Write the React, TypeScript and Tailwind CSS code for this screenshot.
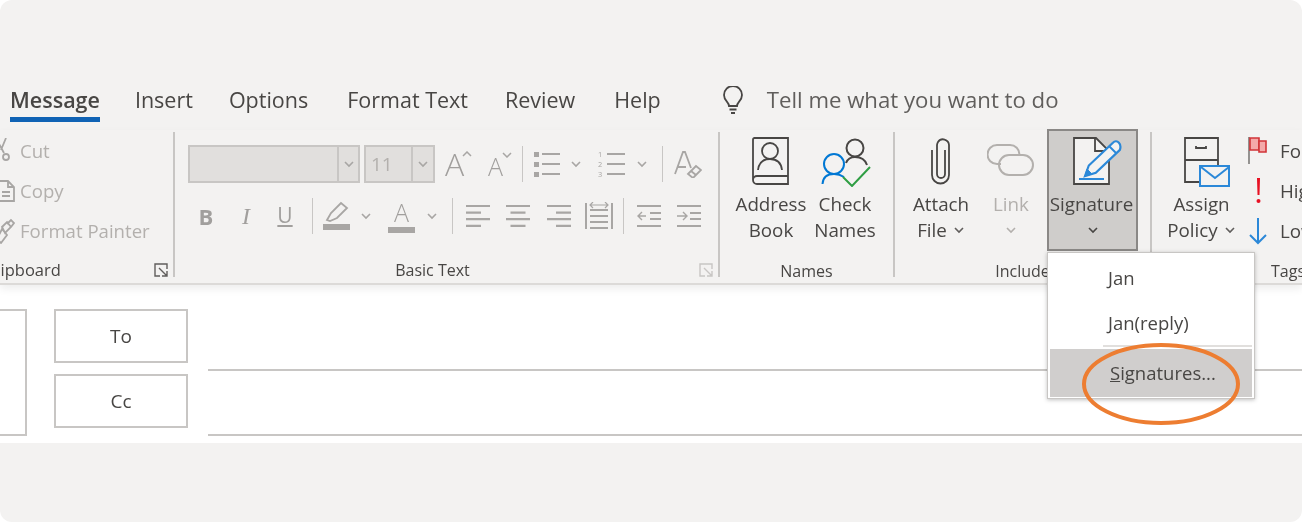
const tabs = [
  { label: "Insert", cls: "ml-[35px]" },
  { label: "Options", cls: "ml-[36px]" },
  { label: "Format Text", cls: "ml-[39px]" },
  { label: "Review", cls: "ml-[37px]" },
  { label: "Help", cls: "ml-[39px]" },
];

const GRAY = "#a8a6a4";
const DARK = "#605e5c";
const BLUE = "#2b88d8";

function Chevron({ color = GRAY, className = "" }: { color?: string; className?: string }) {
  return (
    <svg width="12" height="8" viewBox="0 0 12 8" className={className} fill="none" stroke={color} strokeWidth="1.6">
      <path d="M2 2l4 4 4-4" />
    </svg>
  );
}

function Sep({ h = "h-[36px]", ml }: { h?: string; ml: string }) {
  return <div className={`w-[1px] bg-[#c8c6c4] ${h} ${ml}`} />;
}

function GroupSep() {
  return <div className="w-[2px] h-[145px] mt-[2px] bg-[#c8c6c4] shrink-0" />;
}

function Launcher({ color, className = "" }: { color: string; className?: string }) {
  return (
    <svg width="14" height="14" viewBox="0 0 14 14" className={className} fill="none" stroke={color} strokeWidth="1.4">
      <path d="M13 6V1H1v12h5M5 5l8 8M13 8v5H8" />
    </svg>
  );
}

function Lines({ widths, aligns }: { widths: number[]; aligns: "left" | "center" | "right" }) {
  return (
    <svg width="26" height="24" viewBox="0 0 26 24" stroke={GRAY} strokeWidth="2.2">
      {widths.map((l, i) => {
        const x = aligns === "left" ? 1 : aligns === "right" ? 25 - l : 13 - l / 2;
        return <path key={i} d={`M${x} ${2 + i * 6.6}h${l}`} />;
      })}
    </svg>
  );
}

function ListIcon({ numbered }: { numbered?: boolean }) {
  return (
    <svg width="28" height="28" viewBox="0 0 28 28">
      {[0, 1, 2].map((i) =>
        numbered ? (
          <text key={i} x="0" y={7 + i * 10} fontSize="7.4" fill={GRAY} fontFamily="Open Sans, sans-serif">
            {i + 1}
          </text>
        ) : (
          <rect key={i} x="1" y={2 + i * 10} width="5" height="5" fill={GRAY} />
        ),
      )}
      {[0, 1, 2].map((i) => (
        <path key={i} d={`M9 ${4 + i * 10}h18`} stroke={GRAY} strokeWidth="2" />
      ))}
    </svg>
  );
}

function BigBtn({ icon, lines, w, muted }: { icon: React.ReactNode; lines: React.ReactNode[]; w: string; muted?: boolean }) {
  return (
    <div className={`${w} shrink-0 flex flex-col items-center pt-[7px] ${muted ? "text-[#b3b0ad]" : "text-[#484644]"}`}>
      <div className="h-[54px] flex items-start justify-center">{icon}</div>
      {lines.map((l, i) => (
        <div key={i} className="h-[26px] leading-[26px] text-[18.8px] whitespace-nowrap flex items-center">
          {l}
        </div>
      ))}
    </div>
  );
}

function SmallRow({ icon, text }: { icon: React.ReactNode; text: string }) {
  return (
    <div className="h-[40px] flex items-center">
      <div className="w-[20px] shrink-0">{icon}</div>
      <span className="text-[18.6px] text-[#b3b0ad] whitespace-nowrap">{text}</span>
    </div>
  );
}

function TagRow({ icon, text }: { icon: React.ReactNode; text: string }) {
  return (
    <div className="h-[40px] flex items-center">
      <div className="w-[32px] shrink-0 flex">{icon}</div>
      <span className="text-[18.8px] text-[#484644] whitespace-nowrap">{text}</span>
    </div>
  );
}

export default function App() {
  return (
    <div className="w-[1302px] h-[522px] bg-white font-['Open_Sans',sans-serif] overflow-hidden relative blur-[0.4px]">
      <div className="w-full h-full rounded-[12px] bg-[#f3f2f1] overflow-hidden flex flex-col">
        <div className="h-[84px] shrink-0" />

        {/* Tabs */}
        <div className="h-[46px] shrink-0 pl-[10px] flex items-start text-[21.5px] text-[#484644] whitespace-nowrap">
          <div className="h-[38px] border-b-[5px] border-[#0f62b4] font-semibold leading-[32px]">Message</div>
          {tabs.map((t) => (
            <div key={t.label} className={`${t.cls} leading-[32px]`}>
              {t.label}
            </div>
          ))}
          <svg width="22" height="28" viewBox="0 0 22 28" className="ml-[61px] mt-[2px]" fill="none" stroke="#484644" strokeWidth="1.8">
            <path d="M7 20c0-4-5-5-5-11a9 9 0 0 1 18 0c0 6-5 7-5 11zM7.5 23.5h7M9 27h4" />
          </svg>
          <div className="ml-[23px] leading-[32px] text-[22.2px] text-[#605e5c]">Tell me what you want to do</div>
        </div>

        {/* Ribbon */}
        <div className="h-[155px] shrink-0 flex border-b-2 border-[#dcdad8] shadow-[0_4px_8px_rgba(0,0,0,0.07)] relative">
          {/* Clipboard */}
          <div className="w-[173px] shrink-0 flex flex-col">
            <div className="flex-1 pt-[1px]">
              <SmallRow
                text="Cut"
                icon={
                  <svg width="16" height="26" viewBox="0 0 16 26" fill="none" stroke={GRAY} strokeWidth="1.8">
                    <path d="M6 0L1 12M-2 4l6 11" />
                    <circle cx="6" cy="19" r="3" />
                  </svg>
                }
              />
              <SmallRow
                text="Copy"
                icon={
                  <svg width="16" height="24" viewBox="0 0 16 24" fill="none" stroke={GRAY} strokeWidth="1.8">
                    <path d="M-2 2h10l6 6v14H-2zM8 2v6h6M2 13h8M2 17h8" />
                  </svg>
                }
              />
              <SmallRow
                text="Format Painter"
                icon={
                  <svg width="16" height="26" viewBox="0 0 16 26" fill="none" stroke={GRAY} strokeWidth="1.8">
                    <path d="M2 9l5-5 4 5-6 6zM7 6l4-4 3 3-3 4M2 11l5 6-6 8-4-4z" />
                  </svg>
                }
              />
            </div>
            <div className="h-[26px] leading-[28px] flex items-center relative">
              <span className="text-[16.5px] text-[#484644] -ml-[14px]">Clipboard</span>
              <Launcher color="#605e5c" className="absolute left-[154px] top-[6px]" />
            </div>
          </div>
          <GroupSep />

          {/* Basic Text */}
          <div className="w-[543px] shrink-0 flex flex-col">
            <div className="flex-1 flex flex-col">
              <div className="h-[38px] mt-[15px] pl-[13px] flex items-center">
                <div className="w-[172px] h-[38px] flex border-2 border-[#c8c6c4] bg-[#e1dfdd]">
                  <div className="flex-1" />
                  <div className="w-[21px] border-l-2 border-[#c8c6c4] flex items-center justify-center"><Chevron /></div>
                </div>
                <div className="w-[71px] h-[38px] ml-[4px] flex border-2 border-[#c8c6c4] bg-[#e1dfdd]">
                  <div className="flex-1 pl-[5px] text-[19px] leading-[34px] text-[#b3b0ad]">11</div>
                  <div className="w-[22px] border-l-2 border-[#c8c6c4] flex items-center justify-center"><Chevron /></div>
                </div>
                <div className="w-[28px] ml-[10px] flex items-start">
                  <span className="text-[32px] leading-[36px] font-light text-[#a19f9d]">A</span>
                  <svg width="10" height="6" viewBox="0 0 10 6" className="mt-[5px] -ml-[2px] shrink-0" fill="none" stroke={GRAY} strokeWidth="1.5"><path d="M1 5l4-4 4 4" /></svg>
                </div>
                <div className="w-[26px] ml-[15px] flex items-start">
                  <span className="text-[25px] leading-[36px] font-light text-[#a19f9d] mt-[3px]">A</span>
                  <svg width="10" height="6" viewBox="0 0 10 6" className="mt-[7px] -ml-[1px] shrink-0" fill="none" stroke={GRAY} strokeWidth="1.5"><path d="M1 1l4 4 4-4" /></svg>
                </div>
                <Sep ml="ml-[8px]" />
                <div className="ml-[10px]"><ListIcon /></div>
                <Chevron className="ml-[9px]" />
                <div className="ml-[16px]"><ListIcon numbered /></div>
                <Chevron className="ml-[10px]" />
                <Sep ml="ml-[14px]" />
                <svg width="28" height="28" viewBox="0 0 28 28" className="ml-[11px]" fill="none" stroke={GRAY} strokeWidth="1.8">
                  <path d="M1 24L9 2h2l6 16M4 17h8" />
                  <path d="M14 24l8-8 5 4-8 8z" />
                  <path d="M17 21l5 4" />
                </svg>
              </div>

              <div className="h-[36px] mt-[15px] flex items-center">
                <span className="w-[24px] ml-[19px] text-center text-[22px] font-bold text-[#a19f9d]">B</span>
                <span className="w-[24px] ml-[16px] text-center text-[24px] italic text-[#a19f9d] font-['Liberation_Serif',serif]">I</span>
                <span className="w-[24px] ml-[15px] text-center text-[21px] underline underline-offset-2 text-[#a19f9d]">U</span>
                <Sep ml="ml-[15px]" />
                <svg width="28" height="30" viewBox="0 0 28 30" className="ml-[10px]" fill="none" stroke={GRAY} strokeWidth="1.8">
                  <path d="M4 19l4-7L18 2l6 5-10 10-7 3z" />
                  <rect x="0" y="23" width="27" height="6" fill={GRAY} stroke="none" />
                </svg>
                <Chevron className="ml-[9px]" />
                <div className="w-[27px] h-[34px] ml-[16px] flex flex-col items-center">
                  <span className="text-[25px] leading-[26px] font-light text-[#a19f9d]">A</span>
                  <div className="w-[27px] h-[6px] mt-[2px] bg-[#a8a6a4]" />
                </div>
                <Chevron className="ml-[11px]" />
                <Sep ml="ml-[14px]" />
                <div className="ml-[12px]"><Lines widths={[24, 15, 24, 15]} aligns="left" /></div>
                <div className="ml-[14px]"><Lines widths={[24, 15, 24, 15]} aligns="center" /></div>
                <div className="ml-[15px]"><Lines widths={[24, 15, 24, 15]} aligns="right" /></div>
                <svg width="28" height="28" viewBox="0 0 28 28" className="ml-[13px]" fill="none" stroke={GRAY} strokeWidth="1.8">
                  <path d="M1 1v26M27 1v26M5 8h18M5 14h18M5 20h18M5 26h18" strokeWidth="2" />
                  <path d="M5 3h18M8 0L5 3l3 3M20 0l3 3-3 3" strokeWidth="1.2" />
                </svg>
                <Sep ml="ml-[10px]" />
                <svg width="26" height="24" viewBox="0 0 26 24" className="ml-[12px]" fill="none" stroke={GRAY} strokeWidth="2.2">
                  <path d="M1 2h24M14 9h11M14 15h11M1 22h24" />
                  <path d="M10 12H2M6 8l-4 4 4 4" strokeWidth="1.4" />
                </svg>
                <svg width="26" height="24" viewBox="0 0 26 24" className="ml-[14px]" fill="none" stroke={GRAY} strokeWidth="2.2">
                  <path d="M1 2h24M14 9h11M14 15h11M1 22h24" />
                  <path d="M1 12h9M7 8l4 4-4 4" strokeWidth="1.4" />
                </svg>
              </div>
            </div>
            <div className="h-[26px] leading-[28px] flex items-center relative">
              <span className="w-full text-center text-[16px] text-[#484644] pr-[28px]">Basic Text</span>
              <Launcher color="#c8c6c4" className="absolute left-[524px] top-[6px]" />
            </div>
          </div>
          <GroupSep />

          {/* Names */}
          <div className="w-[173px] shrink-0 flex flex-col">
            <div className="flex-1 flex pl-[14px]">
              <BigBtn
                w="w-[74px]"
                lines={["Address", "Book"]}
                icon={
                  <svg width="38" height="48" viewBox="0 0 38 48" fill="none" stroke="#484644" strokeWidth="1.8">
                    <path d="M1 43V2.5A1.5 1.5 0 0 1 2.5 1H36v46H5a4 4 0 0 1-4-4a4 4 0 0 1 4-4h31" />
                    <circle cx="18" cy="14" r="8" />
                    <path d="M6 33c1-8 6-11 12-11s11 3 12 11" />
                  </svg>
                }
              />
              <BigBtn
                w="w-[74px]"
                lines={["Check", "Names"]}
                icon={
                  <svg width="52" height="50" viewBox="0 0 52 50" className="ml-[3px]" fill="none" strokeWidth="2">
                    <circle cx="34" cy="11" r="8.5" stroke="#484644" />
                    <path d="M25 26c2-5 5-6 9-6 5 0 10 2 12 8" stroke="#484644" />
                    <circle cx="13" cy="27" r="10" stroke="#0078d4" />
                    <path d="M1.5 47c.5-8 5.500-10 11.500-10 4 0 7 1 10 3" stroke="#0078d4" />
                    <path d="M22 40l9 9 18-19" stroke="#2f9e44" />
                  </svg>
                }
              />
            </div>
            <div className="h-[26px] leading-[28px] text-center text-[16px] text-[#484644]">Names</div>
          </div>
          <GroupSep />

          {/* Include */}
          <div className="w-[255px] shrink-0 flex flex-col">
            <div className="flex-1 flex">
              <BigBtn
                w="w-[92px]"
                lines={[
                  "Attach",
                  <span className="flex items-center gap-[6px]">File <Chevron color={DARK} /></span>,
                ]}
                icon={
                  <svg width="20" height="48" viewBox="0 0 20 48" fill="none" stroke="#484644" strokeWidth="1.8">
                    <path d="M14 13v24a4 4 0 0 1-8 0V8a7 7 0 0 1 1-3a6 6 0 0 1 11 3v30a8.5 8.5 0 0 1-17 0V13" />
                  </svg>
                }
              />
              <BigBtn
                w="w-[48px]"
                muted
                lines={["Link", <Chevron color="#b3b0ad" />]}
                icon={
                  <svg width="48" height="34" viewBox="0 0 48 34" className="mt-[7px]" fill="none" stroke="#b3b0ad" strokeWidth="2">
                    <path d="M14 20H10a9.500 9.500 0 0 1 0-19h13a9.500 9.500 0 0 1 9.500 9.500" />
                    <path d="M22 11h14a10 10 0 0 1 0 20H22a10 10 0 0 1 0-20" />
                  </svg>
                }
              />
              <div className="w-[91px] h-[122px] ml-[12px] -mt-[1px] bg-[#cfcdcb] border-2 border-[#8a8886] shrink-0 text-[#484644] flex flex-col items-center pt-[5px]">
                <div className="h-[55px]">
                  <svg width="52" height="50" viewBox="0 0 52 50" className="ml-[7px]" fill="none">
                    <path d="M4 2h22l13 13v33H4z" stroke="#484644" strokeWidth="1.8" fill="#f3f2f1" />
                    <path d="M25 2v13h14" stroke="#484644" strokeWidth="1.8" />
                    <path d="M15 40l3.800-10.500L42.900 6.700c2-2 4.500-1.500 6 0s2 4 1 7.200L25.800 36.700z" stroke={BLUE} strokeWidth="2.2" fill="#f3f2f1" />
                    <path d="M39 10l7 7" stroke={BLUE} strokeWidth="2" />
                    <path d="M15 40l2-7 5 5z" fill={BLUE} stroke={BLUE} strokeWidth="1" />
                    <path d="M9 43h25" stroke={BLUE} strokeWidth="2" />
                  </svg>
                </div>
                <div className="h-[26px] leading-[26px] text-[18.8px] -ml-[2px]">Signature</div>
                <div className="h-[26px] flex items-center"><Chevron color="#484644" /></div>
              </div>
            </div>
            <div className="h-[26px] leading-[28px] text-center text-[16px] text-[#484644]">Include</div>
          </div>
          <GroupSep />

          {/* Tags */}
          <div className="flex-1 flex flex-col min-w-0">
            <div className="flex-1 flex">
              <BigBtn
                w="w-[93px] ml-[3px]"
                lines={[
                  "Assign",
                  <span className="flex items-center gap-[6px]">Policy <Chevron color={DARK} /></span>,
                ]}
                icon={
                  <svg width="46" height="50" viewBox="0 0 46 50" className="ml-[11px]" fill="none">
                    <path d="M1 1h33v44H1zM1 23h33M12 9v2h10V9" stroke="#484644" strokeWidth="1.8" />
                    <rect x="16" y="29" width="29" height="20" fill="#f3f2f1" stroke={BLUE} strokeWidth="2" />
                    <path d="M17 30l14 11 14-11" stroke={BLUE} strokeWidth="2" />
                  </svg>
                }
              />
              <div className="pt-[1px]">
                <TagRow
                  text="Follow Up"
                  icon={
                    <svg width="20" height="28" viewBox="0 0 20 28" fill="none" className="-mt-[1px]">
                      <path d="M1 0v27" stroke="#8a8886" strokeWidth="1.8" />
                      <path d="M2 1h9v12H2z" fill="#f4a9a9" stroke="#d13438" strokeWidth="1.6" />
                      <path d="M11 4h7v11h-7z" fill="#f4a9a9" stroke="#d13438" strokeWidth="1.6" />
                    </svg>
                  }
                />
                <TagRow
                  text="High"
                  icon={
                    <svg width="20" height="28" viewBox="0 0 20 28">
                      <path d="M9 1h3l-.5 17h-2z" fill="#e81123" />
                      <circle cx="10.500" cy="24" r="2" fill="#e81123" />
                    </svg>
                  }
                />
                <TagRow
                  text="Low"
                  icon={
                    <svg width="20" height="28" viewBox="0 0 20 28" fill="none" stroke={BLUE} strokeWidth="2">
                      <path d="M10 1v25M2 18l8 8 8-8" />
                    </svg>
                  }
                />
              </div>
            </div>
            <div className="h-[26px] leading-[28px] pl-[119px] text-[16px] text-[#484644]">Tags</div>
          </div>
        </div>

        {/* Recipients */}
        <div className="h-[158px] shrink-0 bg-white flex pt-[24px] overflow-hidden">
          <div className="w-[35px] h-[127px] -ml-[8px] shrink-0 border-2 border-[#c8c6c4]" />
          <div className="w-[134px] ml-[27px] shrink-0 flex flex-col gap-[11px]">
            <div className="h-[54px] border-2 border-[#c8c6c4] flex items-center justify-center text-[19px] text-[#484644]">To</div>
            <div className="h-[54px] border-2 border-[#c8c6c4] flex items-center justify-center text-[19px] text-[#484644]">Cc</div>
          </div>
          <div className="flex-1 ml-[20px] flex flex-col">
            <div className="h-[62px] border-b-2 border-[#c8c6c4]" />
            <div className="h-[65px] border-b-2 border-[#c8c6c4]" />
          </div>
        </div>
        <div className="flex-1" />
      </div>

      {/* Signature menu */}
      <div className="absolute left-[1047px] top-[252px] w-[208px] h-[147px] bg-white border border-[#c8c6c4] shadow-[0_1px_4px_rgba(0,0,0,0.25)] flex flex-col pt-[2px] text-[18.5px] text-[#484644]">
        <div className="h-[45px] pl-[60px] flex items-center">Jan</div>
        <div className="h-[45px] pl-[60px] flex items-center">Jan(reply)</div>
        <div className="h-[2px] ml-[55px] mr-[2px] bg-[#e1dfdd]" />
        <div className="mx-[2px] flex-1 mb-[1px] mt-[2px] bg-[#d0cecd] pl-[60px] flex items-center"><span><span className="underline">S</span>ignatures...</span></div>
      </div>

      {/* Annotation */}
      <svg width="170" height="92" viewBox="0 0 170 92" className="absolute left-[1078px] top-[338px]" fill="none">
        <ellipse cx="83" cy="46" rx="77" ry="39" stroke="#ed7d31" strokeWidth="4" />
      </svg>
    </div>
  );
}
